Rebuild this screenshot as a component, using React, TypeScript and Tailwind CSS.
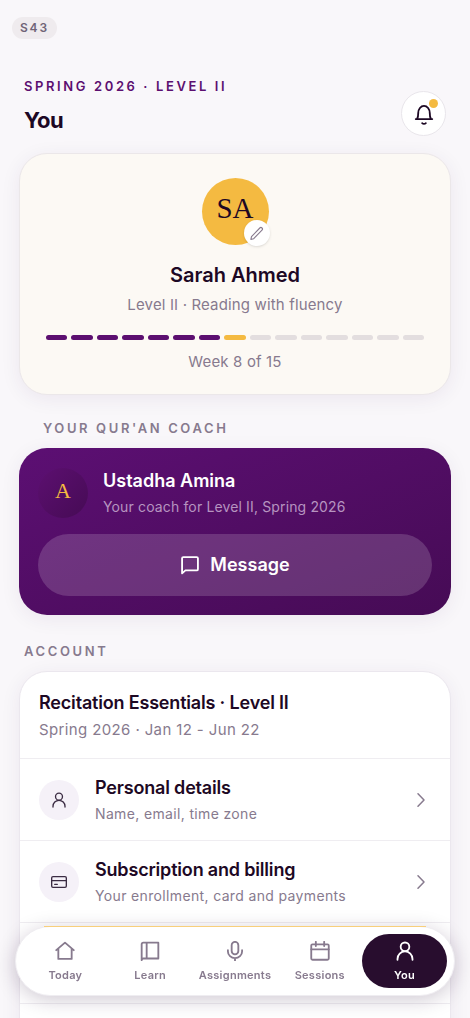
import type { ReactNode } from "react"

const TOTAL_WEEKS = 15
const CURRENT_WEEK = 8

function Icon({
  children,
  className,
  width = 1.5,
}: {
  children: ReactNode
  className: string
  width?: number
}) {
  return (
    <svg
      xmlns="http://www.w3.org/2000/svg"
      viewBox="0 0 24 24"
      fill="none"
      stroke="currentColor"
      strokeWidth={width}
      strokeLinecap="round"
      strokeLinejoin="round"
      className={className}
      aria-hidden="true"
    >
      {children}
    </svg>
  )
}

const person = (
  <>
    <circle cx="12" cy="7" r="5.2" />
    <path d="M3 22.500v-1a9 9 0 0 1 18 0v1" />
  </>
)

const card = (
  <>
    <rect x="1" y="4" width="22" height="16" rx="2" />
    <path d="M1 10h22M5.500 15.500h4" />
  </>
)

const tabs = [
  {
    label: "Today",
    icon: <path d="M1.500 11 12 2l10.500 9M4 9v12.500h16V9" />,
  },
  {
    label: "Learn",
    icon: <path d="M2 23V4a2 2 0 0 1 2-2h18v19H4a2 2 0 0 0-2 2M8 2v19" />,
  },
  {
    label: "Assignments",
    icon: (
      <>
        <rect x="8" y="1" width="8" height="15" rx="4" />
        <path d="M3.500 11v1.500a8.500 8 0 0 0 17 0V11M12 20.500V24" />
      </>
    ),
  },
  {
    label: "Sessions",
    icon: (
      <>
        <rect x="1.500" y="4" width="21" height="18.500" rx="1.500" />
        <path d="M1.500 10h21M7 1v5M17 1v5" />
      </>
    ),
  },
  { label: "You", icon: person },
]

function Row({
  title,
  text,
  icon,
}: {
  title: string
  text: string
  icon: ReactNode
}) {
  return (
    <a
      href="#"
      className="flex h-[82px] items-center gap-4 border-t border-[#efedf1] px-[19px]"
    >
      <span className="flex size-10 shrink-0 items-center justify-center rounded-full bg-[#f5f1f8] text-[#3b2c43]">
        <Icon className="size-4" width={2}>
          {icon}
        </Icon>
      </span>
      <span className="flex-1">
        <span className="block text-lg leading-7 font-semibold tracking-[-0.01em]">
          {title}
        </span>
        <span className="block text-sm leading-6 tracking-wide text-[#877a8e]">
          {text}
        </span>
      </span>
      <svg
        viewBox="0 0 8 14"
        fill="none"
        stroke="currentColor"
        strokeWidth="1.5"
        strokeLinecap="round"
        strokeLinejoin="round"
        className="mr-1.5 h-3.5 w-2 text-[#877a8e]"
        aria-hidden="true"
      >
        <path d="m1 .8 6 6.200-6 6.200" />
      </svg>
    </a>
  )
}

export default function App() {
  return (
    <div className="h-screen overflow-hidden bg-[#f9f7fa] font-['Inter',sans-serif] text-[#1d0824]">
      <div className="flex px-3 pt-[17px]">
        <span className="rounded-full bg-[#efebee] px-2 text-xs leading-[22px] font-semibold tracking-[0.15em] text-[#706477]">
          S43
        </span>
      </div>

      <main className="px-[19px]">
        <header className="flex items-end justify-between px-[5px] pt-[37px]">
          <div>
            <p className="text-[13px] leading-5 font-semibold tracking-[0.2em] text-[#5c0f70]">
              SPRING 2026 · LEVEL II
            </p>
            <h1 className="mt-2 text-[22px] leading-8 font-bold tracking-tight">
              You
            </h1>
          </div>
          <button
            type="button"
            aria-label="Notifications"
            className="relative flex size-[45px] items-center justify-center rounded-full border border-[#e9e6eb] bg-white"
          >
            <Icon className="size-[22px]" width={2}>
              <path d="M3 17.500h18M4.500 17.500c1-1.800 1.200-3.500 1.200-6.500a6.300 7.800 0 0 1 12.600 0c0 3 .2 4.700 1.200 6.500M10 22c1 1 3 1 4 0" />
            </Icon>
            <span className="absolute top-[7px] right-[7px] size-[9px] rounded-full bg-[#f4ba41]" />
          </button>
        </header>

        <section className="mt-[17px] flex flex-col items-center rounded-[28px] border border-[#ebe7e9] bg-[#fcf9f4] px-[26px] pt-6 pb-5 shadow-[0_4px_20px_rgba(60,20,80,0.07)]">
          <div className="relative flex size-[67px] items-center justify-center rounded-full bg-[#f4ba41] pb-1.5 font-['Liberation_Serif',serif] text-[29px] leading-none">
            SA
            <button
              type="button"
              aria-label="Edit photo"
              className="absolute -right-px -bottom-px flex size-[26px] items-center justify-center rounded-full bg-white text-[#877a8e] shadow-sm"
            >
              <Icon className="size-[15px]" width={1.8}>
                <path d="M3 21.500 4 17 17.300 3.200a2.400 2.400 0 0 1 3.500 3.500L7.500 20.300z" />
              </Icon>
            </button>
          </div>
          <h2 className="mt-4 text-xl leading-7 font-semibold">Sarah Ahmed</h2>
          <p className="mt-1 text-[15px] leading-6 tracking-[0.01em] text-[#877a8e]">
            Level II · Reading with fluency
          </p>
          <div className="mt-[18px] flex w-full gap-1">
            {Array.from({ length: TOTAL_WEEKS }, (_, i) => (
              <span
                key={i}
                className={
                  i + 1 < CURRENT_WEEK
                    ? "h-[5px] flex-1 rounded-full bg-[#5c0f70]"
                    : i + 1 === CURRENT_WEEK
                      ? "h-[5px] flex-1 rounded-full bg-[#f4ba41]"
                      : "h-[5px] flex-1 rounded-full bg-[#e3dedf]"
                }
              />
            ))}
          </div>
          <p className="mt-2.5 text-[15px] leading-6 tracking-[0.01em] text-[#877a8e]">
            Week {CURRENT_WEEK} of {TOTAL_WEEKS}
          </p>
        </section>

        <h2 className="mt-[23px] pl-6 text-[13px] leading-5 font-semibold tracking-[0.2em] text-[#877a8e]">
          YOUR QUR'AN COACH
        </h2>
        <section className="mt-2.5 rounded-[28px] bg-linear-to-br from-[#5c0f73] to-[#460b55] p-[19px] text-white shadow-[0_4px_20px_rgba(60,20,80,0.07)]">
          <div className="flex items-center gap-[15px]">
            <span className="flex size-[50px] items-center justify-center rounded-full bg-linear-to-br from-[#5c0f70] to-[#460b55] pb-1 font-['Liberation_Serif',serif] text-[22px] leading-none text-[#f4ba41]">
              A
            </span>
            <div>
              <h3 className="text-lg leading-7 font-semibold">Ustadha Amina</h3>
              <p className="text-sm leading-6 tracking-[0.01em] text-[#b694c0]">
                Your coach for Level II, Spring 2026
              </p>
            </div>
          </div>
          <button
            type="button"
            className="mt-[15px] flex h-[62px] w-full items-center justify-center gap-2.5 rounded-full bg-white/16 text-lg font-semibold"
          >
            <Icon className="size-5" width={2.2}>
              <path d="M2.500 22V4A1.500 1.500 0 0 1 4 2.500h16A1.500 1.500 0 0 1 21.500 4v13a1.500 1.500 0 0 1-1.500 1.500H6.500z" />
            </Icon>
            Message
          </button>
        </section>

        <h2 className="mt-[26px] pl-[5px] text-[13px] leading-5 font-semibold tracking-[0.2em] text-[#877a8e]">
          ACCOUNT
        </h2>
        <section className="mt-2.5 min-h-screen rounded-[28px] border border-[#ebe7ee] bg-white shadow-[0_4px_20px_rgba(60,20,80,0.07)]">
          <div className="px-[19px] pt-[17px] pb-[15px]">
            <h3 className="text-lg leading-7 font-semibold tracking-[-0.01em]">
              Recitation Essentials · Level II
            </h3>
            <p className="text-[15px] leading-[26px] tracking-wide text-[#877a8e]">
              Spring 2026 · Jan 12 - Jun 22
            </p>
          </div>
          <Row
            title="Personal details"
            text="Name, email, time zone"
            icon={person}
          />
          <Row
            title="Subscription and billing"
            text="Your enrollment, card and payments"
            icon={card}
          />
          <div className="h-[82px] border-y border-[#efedf1]" />
        </section>
      </main>

      <nav className="fixed inset-x-[15px] bottom-[22px] grid h-[70px] grid-cols-5 rounded-full border border-[#efedf1] bg-white p-[7px] shadow-[0_4px_20px_rgba(40,15,55,0.22)]">
        <span className="absolute inset-x-7 -top-px h-px bg-[#f8cf7c]" />
        {tabs.map((tab) => (
          <a
            key={tab.label}
            href="#"
            aria-current={tab.label === "You" ? "page" : undefined}
            className={
              tab.label === "You"
                ? "flex flex-col items-center justify-center gap-1.5 rounded-full bg-[#280d2e] pt-0.5 text-white"
                : "flex flex-col items-center justify-center gap-1.5 rounded-full pt-0.5 text-[#877a8e]"
            }
          >
            <Icon className="size-5" width={2.2}>
              {tab.icon}
            </Icon>
            <span className="text-[11px] leading-4 font-semibold tracking-wide">
              {tab.label}
            </span>
          </a>
        ))}
      </nav>
    </div>
  )
}
